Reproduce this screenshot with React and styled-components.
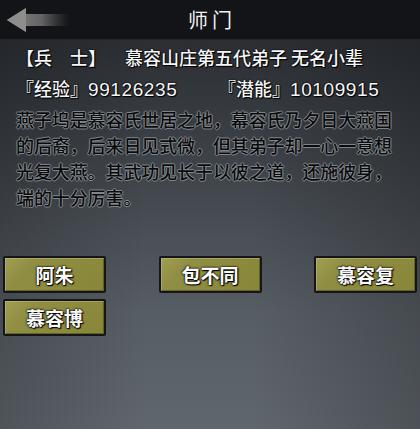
import React from 'react';
import styled, { createGlobalStyle } from 'styled-components';

const GlobalStyle = createGlobalStyle`
  html, body {
    margin: 0;
    padding: 0;
    background: #141518;
  }
  body {
    font-family: "Noto Sans CJK SC", "Noto Sans", sans-serif;
  }
`;

const Page = styled.div`
  width: 420px;
  height: 429px;
  display: flex;
  flex-direction: column;
  overflow: hidden;
`;

const TopBar = styled.div`
  height: 39px;
  flex: none;
  background: #131417;
  border-bottom: 1px solid #24272b;
  display: grid;
  grid-template-columns: 80px 1fr 80px;
  align-items: center;
`;

const BackButton = styled.div`
  display: flex;
  align-items: center;
  padding-left: 6px;
  height: 100%;
`;

const Title = styled.div`
  text-align: center;
  color: #f2f2f2;
  font-size: 20px;
  letter-spacing: 4px;
  line-height: 1;
  padding-left: 4px;
`;

const Body = styled.div`
  flex: 1;
  background:
    linear-gradient(90deg, rgba(0,0,0,0.18) 0%, rgba(0,0,0,0) 35%, rgba(0,0,0,0) 60%, rgba(0,0,0,0.2) 100%),
    linear-gradient(180deg, #2b2f34 0%, #40454b 35%, #575d64 70%, #60666d 100%);
  padding: 4px 3px 0 3px;
`;

const Info = styled.div`
  padding: 0 10px 0 13px;
`;

const StatLine = styled.div`
  display: flex;
  align-items: center;
  height: 26px;
  margin-top: ${p => p.$gap || 0}px;
  font-size: 18px;
  font-weight: 500;
  color: #f6f6f6;
  text-shadow: 0 0 2px #000, 0 0 1px #000, 1px 1px 1px #000;
  white-space: nowrap;
`;

const Cell = styled.span`
  width: ${p => p.$w ? `${p.$w}px` : 'auto'};
  flex: none;
`;

const Num = styled.span`
  font-family: "Liberation Sans", Arial, sans-serif;
  font-size: 19px;
  letter-spacing: 0.6px;
`;

const Story = styled.p`
  margin: 5px 0 0 0;
  font-size: 18px;
  font-weight: 500;
  line-height: 26px;
  color: #0b0b0b;
  text-shadow:
    1px 0 0 rgba(150,156,162,0.75),
    -1px 0 0 rgba(150,156,162,0.75),
    0 1px 0 rgba(150,156,162,0.75),
    0 -1px 0 rgba(150,156,162,0.75);
  letter-spacing: -0.1px;
`;

const ButtonGrid = styled.div`
  margin-top: 46px;
  display: grid;
  grid-template-columns: repeat(3, 103px);
  justify-content: space-between;
  row-gap: 6px;
`;

const NpcButton = styled.div`
  height: 37px;
  box-sizing: border-box;
  border: 2px solid #15161a;
  border-radius: 2px;
  background: linear-gradient(135deg, #a09f52 0%, #8f8e42 25%, #878639 100%);
  box-shadow: inset 1px 1px 0 rgba(210,210,150,0.35), inset -1px -1px 0 rgba(40,40,10,0.4);
  display: flex;
  align-items: center;
  justify-content: center;
  color: #fbfbfb;
  font-size: 19px;
  font-weight: 700;
  text-shadow: 0 0 2px #000, 0 0 2px #000, 1px 1px 1px #000;
`;

function BackArrow() {
  return (
    <svg width="64" height="26" viewBox="0 0 64 26">
      <defs>
        <linearGradient id="shaft" x1="0" y1="0" x2="1" y2="0">
          <stop offset="0" stopColor="#8c8c8c" />
          <stop offset="0.55" stopColor="#777" stopOpacity="0.8" />
          <stop offset="1" stopColor="#555" stopOpacity="0" />
        </linearGradient>
      </defs>
      <polygon points="1,13 20,1 20,7 64,7 64,19 20,19 20,25" fill="url(#shaft)" />
      <polygon points="1,13 20,1 20,25" fill="#8e8e8e" />
    </svg>
  );
}

const npcs = ['阿朱', '包不同', '慕容复', '慕容博'];

export default function App() {
  return (
    <Page>
      <GlobalStyle />
      <TopBar>
        <BackButton><BackArrow /></BackButton>
        <Title>师门</Title>
        <div />
      </TopBar>
      <Body>
        <Info>
          <StatLine $gap={0}>
            <Cell $w={109}>【兵　士】</Cell>
            <Cell>慕容山庄第五代弟子 无名小辈</Cell>
          </StatLine>
          <StatLine $gap={5}>
            <Cell $w={202}>『经验』<Num>99126235</Num></Cell>
            <Cell>『潜能』<Num>10109915</Num></Cell>
          </StatLine>
          <Story>
            燕子坞是慕容氏世居之地，幕容氏乃夕日大燕国<br />
            的后裔，后来日见式微，但其弟子却一心一意想<br />
            光复大燕。其武功见长于以彼之道，还施彼身，<br />
            端的十分厉害。
          </Story>
        </Info>
        <ButtonGrid>
          {npcs.map(name => (
            <NpcButton key={name}>{name}</NpcButton>
          ))}
        </ButtonGrid>
      </Body>
    </Page>
  );
}
